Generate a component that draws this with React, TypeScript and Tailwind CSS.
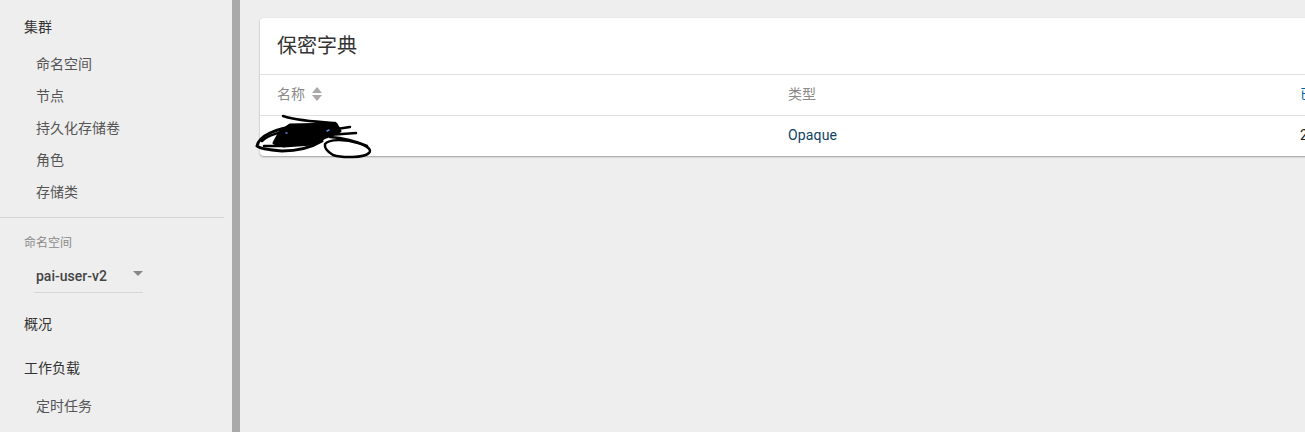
const font = "font-['Roboto','Noto_Sans_CJK_SC',sans-serif]"

function Scribble() {
  return (
    <svg
      className="absolute left-[-6px] top-[-4px] pointer-events-none"
      width="120"
      height="50"
      viewBox="254 112 120 50"
      fill="none"
      stroke="#000"
      strokeLinecap="round"
      strokeLinejoin="round"
    >
      {/* top stroke */}
      <path d="M283 116 C298 121 318 122 335 123" strokeWidth="2.5" />
      {/* dense middle */}
      <path d="M290 125 L336 124 L340 131 L326 137 L312 144 L284 146 L274 143 L280 132 Z" fill="#000" strokeWidth="3" />
      {/* outer loops */}
      <path d="M257 146 C259 136 275 128 300 126 M257 146 C260 149 270 150 282 151 C298 151 312 147 322 141" strokeWidth="3" />
      <path d="M262 141 C268 135 278 132 292 131 M264 146 C270 146 276 146 284 146" strokeWidth="2.5" />
      {/* strokes to the right */}
      <path d="M330 130 L350 127 M328 135 L356 133 M330 137 C345 138 358 142 367 146" strokeWidth="2.5" />
      {/* small loop */}
      <path d="M325 144 C329 139 345 139 358 143 C368 146 372 150 369 153 C364 158 342 158 333 155 C328 152 324 149 325 144 Z" strokeWidth="2.5" />
      {/* text showing through */}
      <path d="M286 133 L287 133 M327 131 L329 130" stroke="#5b8fe0" strokeWidth="1.5" />
    </svg>
  )
}

function Root({ children }: { children: string }) {
  return <div className="flex items-center pl-6 text-sm text-[#333333]">{children}</div>
}

function Sub({ children }: { children: string }) {
  return <div className="flex h-8 items-center pl-9 text-sm text-[#555555]">{children}</div>
}

export default function App() {
  return (
    <div className={`flex h-[432px] w-[1305px] overflow-hidden bg-[#eeeeee] ${font}`}>
      {/* Sidebar */}
      <aside className="flex h-full w-[240px] shrink-0 border-r-8 border-[#a9a9a9]">
        <div className="w-[232px] pt-[17px]">
          <Root>集群</Root>
          <div className="mt-[11px]">
            <Sub>命名空间</Sub>
            <Sub>节点</Sub>
            <Sub>持久化存储卷</Sub>
            <Sub>角色</Sub>
            <Sub>存储类</Sub>
          </div>
          <div className="mt-[9px] mr-2 h-px bg-[#d6d6d6]" />
          <div className="mt-[18px] pl-6 text-xs leading-[15px] text-[#8a8a8a]">命名空间</div>
          <div className="ml-[34px] mt-[11px] flex h-[31px] w-[109px] items-center justify-between border-b border-[#d6d6d6] pl-0.5 pb-[3px]">
            <span className="text-sm font-medium text-[#444444]">pai-user-v2</span>
            <span className="mb-1 h-0 w-0 border-x-[5px] border-t-[5px] border-x-transparent border-t-[#888888]" />
          </div>
          <div className="mt-[21px]">
            <Root>概况</Root>
          </div>
          <div className="mt-[24px]">
            <Root>工作负载</Root>
          </div>
          <div className="mt-[12px]">
            <Sub>定时任务</Sub>
          </div>
        </div>
      </aside>

      {/* Main */}
      <main className="min-w-0 flex-1 pl-5 pt-[18px]">
        <div className="w-[1200px] rounded-sm bg-white shadow-[0_1px_2px_rgba(0,0,0,0.35)]">
          <div className="flex h-[57px] items-center border-b border-[#e0e0e0] pl-[17px] text-xl text-[#333333]">
            保密字典
          </div>
          <div className="flex h-[41px] items-center border-b border-[#e0e0e0] pb-[2px] text-sm text-[#8a8a8a]">
            <div className="flex w-[528px] items-center pl-[17px]">
              名称
              <span className="ml-[7px] flex flex-col gap-[2px]">
                <span className="h-0 w-0 border-x-[5px] border-b-[6px] border-x-transparent border-b-[#a8a8a8]" />
                <span className="h-0 w-0 border-x-[5px] border-t-[6px] border-x-transparent border-t-[#a8a8a8]" />
              </span>
            </div>
            <div className="w-[512px]">类型</div>
            <div className="text-[#00639c]">已创建</div>
          </div>
          <div className="relative flex h-[40px] items-center pb-[2px] text-sm text-[#0d3f66]">
            <div className="w-[528px]" />
            <div className="w-[512px] tracking-[0.15px]">Opaque</div>
            <div className="text-[#212121]">2 天</div>
            <Scribble />
          </div>
        </div>
      </main>
    </div>
  )
}
